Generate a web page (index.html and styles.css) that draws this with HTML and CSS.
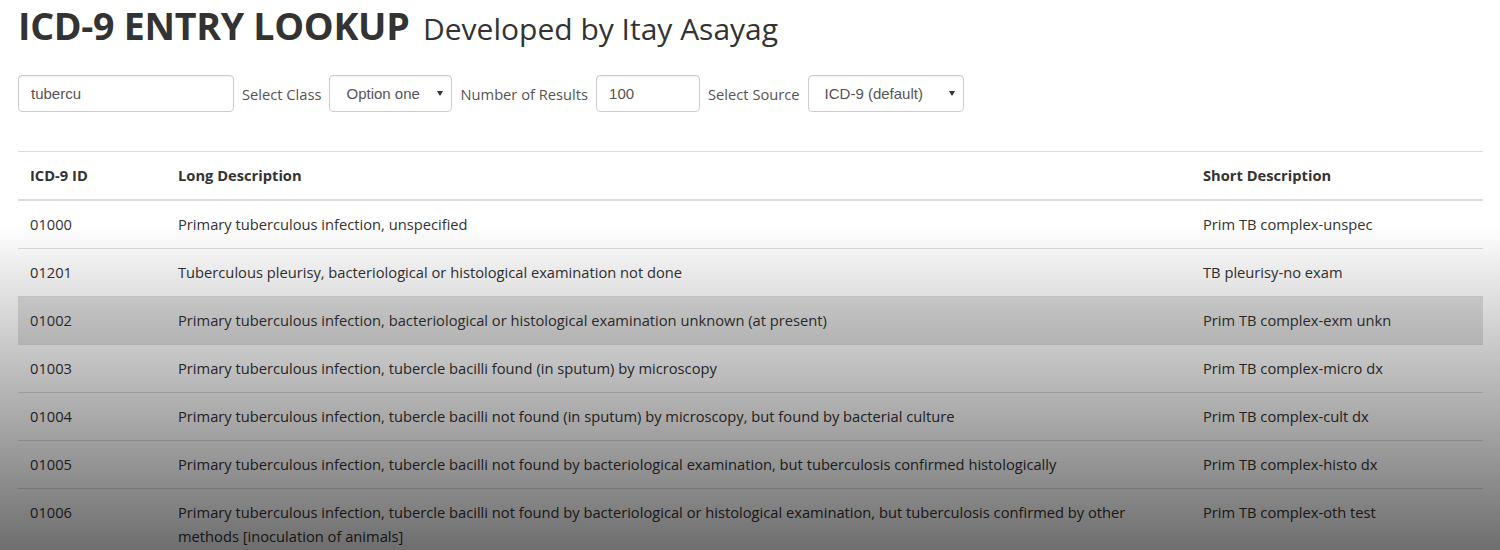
FILE: index.html
```html
<!DOCTYPE html>
<html lang="en">
<head>
<meta charset="utf-8">
<title>ICD-9 Entry Lookup</title>
<link rel="stylesheet" href="styles.css">
</head>
<body>
<div class="page">
  <h1 class="title">ICD-9 ENTRY LOOKUP <small class="subtitle">Developed by Itay Asayag</small></h1>

  <form class="search">
    <input class="field field-query" type="text" value="tubercu">
    <label class="label">Select Class</label>
    <div class="select-wrap select-class">
      <select class="field select"><option>Option one</option></select>
    </div>
    <label class="label">Number of Results</label>
    <input class="field field-num" type="text" value="100">
    <label class="label">Select Source</label>
    <div class="select-wrap select-source">
      <select class="field select"><option>ICD-9 (default)</option></select>
    </div>
  </form>

  <table class="results">
    <colgroup>
      <col class="c-id">
      <col class="c-long">
      <col class="c-short">
    </colgroup>
    <thead>
      <tr><th>ICD-9 ID</th><th>Long Description</th><th>Short Description</th></tr>
    </thead>
    <tbody>
      <tr><td>01000</td><td>Primary tuberculous infection, unspecified</td><td>Prim TB complex-unspec</td></tr>
      <tr><td>01201</td><td>Tuberculous pleurisy, bacteriological or histological examination not done</td><td>TB pleurisy-no exam</td></tr>
      <tr class="hover"><td>01002</td><td>Primary tuberculous infection, bacteriological or histological examination unknown (at present)</td><td>Prim TB complex-exm unkn</td></tr>
      <tr><td>01003</td><td>Primary tuberculous infection, tubercle bacilli found (in sputum) by microscopy</td><td>Prim TB complex-micro dx</td></tr>
      <tr><td>01004</td><td>Primary tuberculous infection, tubercle bacilli not found (in sputum) by microscopy, but found by bacterial culture</td><td>Prim TB complex-cult dx</td></tr>
      <tr><td>01005</td><td>Primary tuberculous infection, tubercle bacilli not found by bacteriological examination, but tuberculosis confirmed histologically</td><td>Prim TB complex-histo dx</td></tr>
      <tr><td>01006</td><td>Primary tuberculous infection, tubercle bacilli not found by bacteriological or histological examination, but tuberculosis confirmed by other methods [inoculation of animals]</td><td>Prim TB complex-oth test</td></tr>
    </tbody>
  </table>
</div>
<div class="shade"></div>
</body>
</html>
```

FILE: styles.css
```css
html, body {
  margin: 0;
  padding: 0;
  background: #fff;
}
body {
  font-family: "Open Sans", "Noto Sans", sans-serif;
  font-size: 14.7px;
  color: #333;
}
.page {
  padding: 0 17px 0 18px;
}
.title {
  margin: 5px 0 0;
  font-size: 37.6px;
  line-height: 42px;
  font-weight: 700;
  color: #333;
  letter-spacing: -0.3px;
}
.subtitle {
  margin-left: 4px;
  font-size: 30px;
  font-weight: 400;
  letter-spacing: 0;
  color: #333;
}
.search {
  display: flex;
  align-items: center;
  gap: 8px;
  margin-top: 25px;
}
.field {
  box-sizing: border-box;
  height: 37px;
  border: 1px solid #ccc;
  border-radius: 4px;
  background: #fff;
  font-family: "Liberation Sans", Arial, sans-serif;
  font-size: 15px;
  color: #555;
  padding: 0 12px;
  box-shadow: inset 0 1px 1px rgba(0,0,0,0.05);
  outline: none;
}
.field-query { width: 216px; }
.field-num { width: 104px; }
.label {
  color: #555;
  font-size: 14.7px;
}
.select-wrap {
  position: relative;
}
.select-wrap::after {
  content: "";
  position: absolute;
  right: 9px;
  top: 16px;
  border-left: 3.5px solid transparent;
  border-right: 3.5px solid transparent;
  border-top: 5px solid #333;
  pointer-events: none;
}
.select {
  appearance: none;
  -webkit-appearance: none;
  padding: 0 16px 0 16px;
  width: 100%;
}
.select-class { width: 123px; }
.select-source { width: 156px; }
.results {
  margin-top: 39px;
  width: 100%;
  border-collapse: collapse;
  table-layout: fixed;
  border-top: 1px solid #ddd;
}
.c-id { width: 148px; }
.c-long { width: 1025px; }
.c-short { width: 292px; }
.results th,
.results td {
  text-align: left;
  vertical-align: top;
  padding: 11px 12px 12px;
  line-height: 24px;
}
.results th {
  font-weight: 700;
  border-bottom: 2px solid #ddd;
}
.results td {
  border-top: 1px solid #ddd;
}
.results tbody tr:first-child td {
  border-top: 0;
}
.results tr.hover td {
  background: #e2e2e2;
}
.shade {
  position: fixed;
  inset: 0;
  pointer-events: none;
  background: linear-gradient(to bottom, rgba(0,0,0,0) 225px, rgba(0,0,0,0.57) 550px);
}
```
